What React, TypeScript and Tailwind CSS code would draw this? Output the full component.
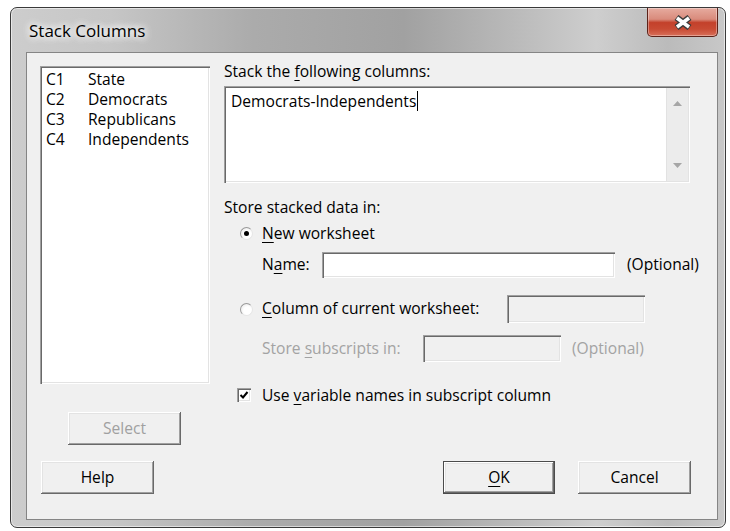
import React from 'react';

const COLUMNS = [
  { id: 'C1', name: 'State' },
  { id: 'C2', name: 'Democrats' },
  { id: 'C3', name: 'Republicans' },
  { id: 'C4', name: 'Independents' },
];

// sunken 3D edge used by edit boxes and the list box
const sunken =
  'shadow-[inset_1px_1px_0_#a0a0a0,inset_2px_2px_0_#696969,inset_-1px_-1px_0_#ffffff,inset_-2px_-2px_0_#e3e3e3]';
// raised 3D edge used by push buttons
const raised =
  'shadow-[inset_-1px_-1px_0_#696969,inset_1px_1px_0_#ffffff,inset_-2px_-2px_0_#a0a0a0,inset_2px_2px_0_#e3e3e3]';

// label with an underlined access key
function Mn({ text, at }: { text: string; at: number }) {
  return (
    <>
      {text.slice(0, at)}
      <span className="underline underline-offset-[3px] decoration-1">{text[at]}</span>
      {text.slice(at + 1)}
    </>
  );
}

function Button({
  children,
  disabled,
  isDefault,
  className = '',
}: {
  children: React.ReactNode;
  disabled?: boolean;
  isDefault?: boolean;
  className?: string;
}) {
  return (
    <div
      className={`h-[33px] shrink-0 flex items-center justify-center bg-[#f0f0f0] ${raised} ${
        isDefault ? 'border border-[#4b4b4b]' : ''
      } ${disabled ? 'text-[#a0a0a0]' : 'text-black'} ${className}`}
    >
      {children}
    </div>
  );
}

function Radio({ checked }: { checked?: boolean }) {
  return (
    <div className="w-[13px] h-[13px] rounded-full bg-[radial-gradient(circle_at_60%_60%,#ffffff_40%,#e2e2e2_100%)] border border-[#9a9a9a] border-r-[#e6e6e6] border-b-[#e6e6e6] flex items-center justify-center shrink-0">
      {checked && <div className="w-[5px] h-[5px] rounded-full bg-black" />}
    </div>
  );
}

function Checkbox({ checked }: { checked?: boolean }) {
  return (
    <div className={`w-[14px] h-[14px] bg-white ${sunken} flex items-center justify-center shrink-0`}>
      {checked && (
        <svg width="10" height="10" viewBox="0 0 10 10">
          <path d="M1.5 5 L4 7.5 L8.5 2" fill="none" stroke="#000" strokeWidth="2" />
        </svg>
      )}
    </div>
  );
}

function CloseButton() {
  return (
    <div className="w-[71px] h-[29px] rounded-b-[5px] border border-[#5c2219] border-t-0 bg-[linear-gradient(180deg,#e6ab9f_0%,#d98b7c_40%,#c3412b_52%,#c84a33_75%,#d8705a_100%)] shadow-[inset_0_0_0_1px_rgba(255,255,255,0.35)] flex items-center justify-center">
      <svg width="20" height="15" viewBox="0 0 20 15">
        <path d="M3.5 2.5 L16.5 12.5 M16.5 2.5 L3.5 12.5" stroke="#3c3c3c" strokeWidth="6.5" />
        <path d="M4 3 L16 12 M16 3 L4 12" stroke="#ffffff" strokeWidth="3.6" />
      </svg>
    </div>
  );
}

export default function App() {
  return (
    <div className="w-[730px] h-[531px] bg-white overflow-hidden pl-[10px] pt-[7px] font-['Open_Sans',sans-serif] text-[15.6px] text-black">
      {/* Aero window frame */}
      <div className="w-[716px] h-[521px] rounded-[7px] border border-[#3a3a3a] bg-[linear-gradient(90deg,#cdcdcd_0%,#c6c6c6_14%,#ababab_34%,#a1a1a1_55%,#b9b9b9_70%,#cecece_82%,#bbbbbb_92%,#c8c8c8_100%)] shadow-[inset_0_0_0_1px_rgba(255,255,255,0.55)] flex flex-col">
        {/* caption */}
        <div className="h-[44px] flex items-start pl-[18px] pr-[7px]">
          <div className="mt-[12px] text-[17px] leading-[22px] [text-shadow:0_0_10px_#ffffff,0_0_10px_#ffffff,0_0_6px_#ffffff]">
            Stack Columns
          </div>
          <div className="ml-auto">
            <CloseButton />
          </div>
        </div>

        {/* client area */}
        <div className="ml-[15px] w-[692px] h-[468px] border border-[#858585] bg-[#f0f0f0] pl-[13px] pr-[12px] pt-[9px] flex flex-col">
          <div className="flex">
            {/* column list */}
            <div className="w-[170px] shrink-0 pt-[4px] flex flex-col">
              <div className={`h-[318px] bg-white ${sunken} pt-[3px] pl-[6px]`}>
                {COLUMNS.map((c) => (
                  <div key={c.id} className="flex h-[20px] leading-[20px]">
                    <span className="w-[42px]">{c.id}</span>
                    <span>{c.name}</span>
                  </div>
                ))}
              </div>
              <Button disabled className="mt-[28px] ml-[28px] w-[113px]">
                Select
              </Button>
            </div>

            {/* options */}
            <div className="ml-[14px] flex flex-col whitespace-nowrap">
              <div className="h-[18px] leading-[18px]">
                <Mn text="Stack the following columns:" at={10} />
              </div>
              <div className={`mt-[6px] w-[466px] h-[97px] bg-white ${sunken} flex`}>
                <div className="flex-1 pl-[7px] pt-[5px] leading-[20px] flex items-start">
                  <span>Democrats-Independents</span>
                  <span className="w-[1px] h-[20px] bg-black ml-[1px]" />
                </div>
                <div className="w-[22px] my-[2px] mr-[2px] bg-[#ececec] border-l border-[#e2e2e2] flex flex-col items-center justify-between py-[13px]">
                  <svg width="9" height="5" viewBox="0 0 9 5">
                    <path d="M0 5 L4.5 0 L9 5 Z" fill="#a6a6a6" />
                  </svg>
                  <svg width="9" height="5" viewBox="0 0 9 5">
                    <path d="M0 0 L4.5 5 L9 0 Z" fill="#a6a6a6" />
                  </svg>
                </div>
              </div>

              <div className="mt-[15px] h-[18px] leading-[18px]">Store stacked data in:</div>

              <div className="mt-[8px] h-[18px] flex items-center pl-[16px]">
                <Radio checked />
                <span className="ml-[9px] leading-[18px]">
                  <Mn text="New worksheet" at={0} />
                </span>
              </div>

              <div className="mt-[10px] h-[26px] flex items-center pl-[38px]">
                <span className="w-[60px] shrink-0">
                  <Mn text="Name:" at={1} />
                </span>
                <div className={`w-[293px] h-[26px] shrink-0 bg-white ${sunken}`} />
                <span className="ml-[12px]">(Optional)</span>
              </div>

              <div className="mt-[17px] h-[28px] flex items-center pl-[16px]">
                <Radio />
                <span className="ml-[9px] w-[245px] shrink-0">
                  <Mn text="Column of current worksheet:" at={0} />
                </span>
                <div className={`w-[138px] h-[28px] shrink-0 bg-[#f0f0f0] ${sunken}`} />
              </div>

              <div className="mt-[12px] h-[27px] flex items-center pl-[38px] text-[#a3a3a3]">
                <span className="w-[161px] shrink-0">
                  <Mn text="Store subscripts in:" at={6} />
                </span>
                <div className={`w-[138px] h-[27px] shrink-0 bg-[#f0f0f0] ${sunken}`} />
                <span className="ml-[11px]">(Optional)</span>
              </div>

              <div className="mt-[24px] h-[18px] flex items-center pl-[13px]">
                <Checkbox checked />
                <span className="ml-[11px] leading-[18px]">
                  <Mn text="Use variable names in subscript column" at={4} />
                </span>
              </div>
            </div>
          </div>

          {/* dialog buttons */}
          <div className="mt-[16px] flex pr-[14px]">
            <Button className="ml-[1px] w-[113px]">Help</Button>
            <Button isDefault className="ml-auto w-[112px]">
              <Mn text="OK" at={0} />
            </Button>
            <Button className="ml-[23px] w-[113px]">Cancel</Button>
          </div>
        </div>
      </div>
    </div>
  );
}
